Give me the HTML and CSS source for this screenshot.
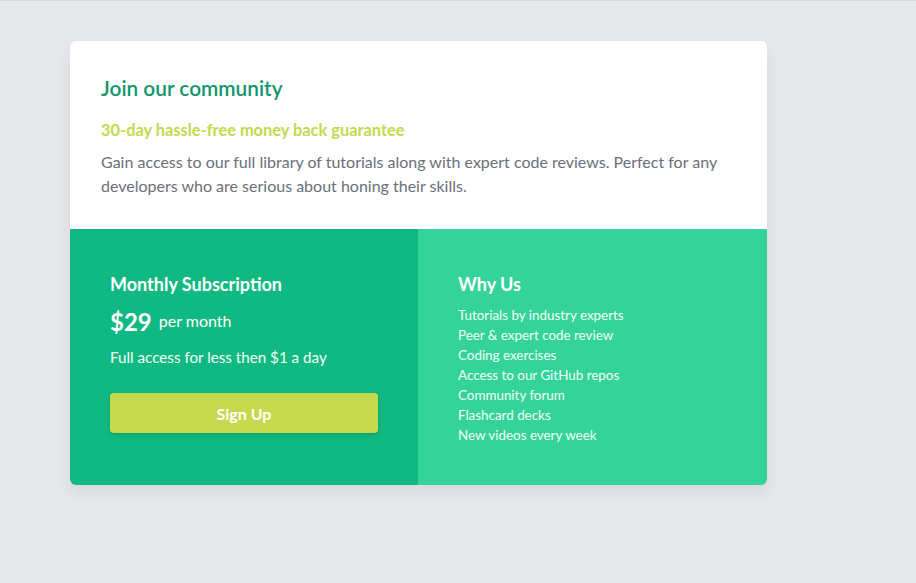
FILE: index.html
```html
<!DOCTYPE html>
<html>
<head>
<meta charset="utf-8">
<link rel="stylesheet" href="styles.css">
</head>
<body>
<div class="topline"></div>
<main class="page">
  <section class="card">
    <div class="intro">
      <h1 class="title">Join our community</h1>
      <h2 class="guarantee">30-day hassle-free money back guarantee</h2>
      <p class="desc">Gain access to our full library of tutorials along with expert code reviews. Perfect for any developers who are serious about honing their skills.</p>
    </div>
    <div class="bottom">
      <div class="plan">
        <h3 class="plan-title">Monthly Subscription</h3>
        <div class="price"><span class="amount">$29</span><span class="per">per month</span></div>
        <p class="plan-note">Full access for less then $1 a day</p>
        <button class="signup">Sign Up</button>
      </div>
      <div class="why">
        <h3 class="why-title">Why Us</h3>
        <ul class="why-list">
          <li>Tutorials by industry experts</li>
          <li>Peer &amp; expert code review</li>
          <li>Coding exercises</li>
          <li>Access to our GitHub repos</li>
          <li>Community forum</li>
          <li>Flashcard decks</li>
          <li>New videos every week</li>
        </ul>
      </div>
    </div>
  </section>
</main>
</body>
</html>
```
FILE: styles.css
```css
* { box-sizing: border-box; }
html, body { margin: 0; padding: 0; }
body {
  background: #e5e7eb;
  font-family: "Lato", "Open Sans", sans-serif;
  min-height: 583px;
}
.topline { height: 1px; background: #d5d7dc; }
.page { padding: 40px 0 0 70px; }
.card {
  width: 697px;
  background: #fff;
  border-radius: 6px;
  overflow: hidden;
  box-shadow: 0 8px 16px rgba(0,0,0,0.06);
}
.intro { padding: 33px 32px 30px 31px; height: 188px; }
.title {
  margin: 0;
  font-size: 20.8px;
  line-height: 28px;
  font-weight: 600;
  color: #12966c;
}
.guarantee {
  margin: 17px 0 0;
  font-size: 16.4px;
  line-height: 22px;
  font-weight: 700;
  color: #c4d94c;
}
.desc {
  margin: 9px 0 0;
  font-size: 16px;
  line-height: 24px;
  color: #6b6f7a;
}
.bottom { display: grid; grid-template-columns: 348px 349px; height: 256px; }
.plan { background: #10b981; padding: 42px 40px 0; color: #fff; }
.why { background: #34d399; padding: 42px 40px 0; color: #fff; }
.plan-title, .why-title {
  margin: 0;
  font-size: 18px;
  line-height: 26px;
  font-weight: 700;
}
.price { display: flex; align-items: center; gap: 7px; margin-top: 10px; height: 30px; }
.amount { font-size: 24px; font-weight: 700; line-height: 30px; }
.per { font-size: 16px; line-height: 20px; padding-bottom: 2px; }
.plan-note { margin: 9px 0 0; font-size: 15.2px; line-height: 22px; font-weight: 400; color: #f3fffa; }
.signup {
  margin-top: 25px;
  width: 268px;
  height: 40px;
  border: 0;
  border-radius: 4px;
  background: #c4d94c;
  color: #fff;
  font-family: inherit;
  font-size: 16px;
  font-weight: 700;
  box-shadow: 0 2px 4px rgba(0,0,0,0.12);
}
.why-list { list-style: none; margin: 8px 0 0; padding: 0; font-size: 13.4px; line-height: 20px; font-weight: 400; color: #f3fffa; }
```
